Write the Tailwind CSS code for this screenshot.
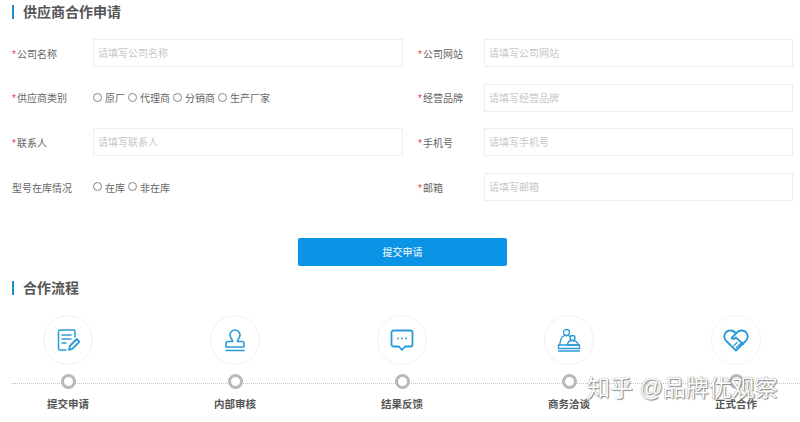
<!DOCTYPE html>
<html lang="zh-CN">
<head>
    <meta charset="UTF-8">
    <meta name="viewport" content="width=device-width, initial-scale=1.0">
    <title>供应商合作申请</title>
    <script src="https://cdn.jsdelivr.net/npm/@tailwindcss/browser@4"></script>
</head>
<body class="bg-white overflow-hidden font-['Liberation_Sans','Noto_Sans_CJK_SC',sans-serif]">
<div class="relative w-[800px] h-[422px] overflow-hidden pl-3 pr-[7px] pt-[4px]">
    <!-- 申请表单 -->
    <div class="flex items-center h-4 gap-[9px]">
        <span class="w-[2px] h-[14px] bg-[#1c8fc9]"></span>
        <h2 class="text-[14px] leading-4 font-bold text-[#555]">供应商合作申请</h2>
    </div>

    <div class="grid grid-cols-[406px_1fr] auto-rows-[28px] gap-y-[16.7px] mt-[19px] text-[10px] text-[#666]">
        <div class="flex items-center">
            <label class="w-[81px] pt-[2px]"><span class="text-[#e0414a] mr-[1px]">*</span>公司名称</label>
            <input class="w-[310px] h-[28px] px-1 pt-[1px] border border-[#eeeeee] outline-none placeholder:text-[#c8c8c8]" placeholder="请填写公司名称">
        </div>
        <div class="flex items-center">
            <label class="w-[66px] pt-[2px]"><span class="text-[#e0414a] mr-[1px]">*</span>公司网站</label>
            <input class="flex-1 h-[28px] px-1 pt-[1px] border border-[#eeeeee] outline-none placeholder:text-[#c8c8c8]" placeholder="请填写公司网站">
        </div>

        <div class="flex items-center">
            <label class="w-[81px] pt-[2px]"><span class="text-[#e0414a] mr-[1px]">*</span>供应商类别</label>
            <div class="flex items-center">
                <span class="w-[9px] h-[9px] -mt-[1px] rounded-full border border-[#888] mr-[3px]"></span><span class="mr-[3px] pt-[2px]">原厂</span>
                <span class="w-[9px] h-[9px] -mt-[1px] rounded-full border border-[#888] mr-[3px]"></span><span class="mr-[3px] pt-[2px]">代理商</span>
                <span class="w-[9px] h-[9px] -mt-[1px] rounded-full border border-[#888] mr-[3px]"></span><span class="mr-[3px] pt-[2px]">分销商</span>
                <span class="w-[9px] h-[9px] -mt-[1px] rounded-full border border-[#888] mr-[3px]"></span><span class="pt-[2px]">生产厂家</span>
            </div>
        </div>
        <div class="flex items-center">
            <label class="w-[66px] pt-[2px]"><span class="text-[#e0414a] mr-[1px]">*</span>经营品牌</label>
            <input class="flex-1 h-[28px] px-1 pt-[1px] border border-[#eeeeee] outline-none placeholder:text-[#c8c8c8]" placeholder="请填写经营品牌">
        </div>

        <div class="flex items-center">
            <label class="w-[81px] pt-[2px]"><span class="text-[#e0414a] mr-[1px]">*</span>联系人</label>
            <input class="w-[310px] h-[28px] px-1 pt-[1px] border border-[#eeeeee] outline-none placeholder:text-[#c8c8c8]" placeholder="请填写联系人">
        </div>
        <div class="flex items-center">
            <label class="w-[66px] pt-[2px]"><span class="text-[#e0414a] mr-[1px]">*</span>手机号</label>
            <input class="flex-1 h-[28px] px-1 pt-[1px] border border-[#eeeeee] outline-none placeholder:text-[#c8c8c8]" placeholder="请填写手机号">
        </div>

        <div class="flex items-center">
            <label class="w-[81px] pt-[2px]">型号在库情况</label>
            <div class="flex items-center">
                <span class="w-[9px] h-[9px] -mt-[1px] rounded-full border border-[#888] mr-[3px]"></span><span class="mr-[3px] pt-[2px]">在库</span>
                <span class="w-[9px] h-[9px] -mt-[1px] rounded-full border border-[#888] mr-[3px]"></span><span class="pt-[2px]">非在库</span>
            </div>
        </div>
        <div class="flex items-center">
            <label class="w-[66px] pt-[2px]"><span class="text-[#e0414a] mr-[1px]">*</span>邮箱</label>
            <input class="flex-1 h-[28px] px-1 pt-[1px] border border-[#eeeeee] outline-none placeholder:text-[#c8c8c8]" placeholder="请填写邮箱">
        </div>
    </div>

    <button class="block w-[209px] h-[28px] ml-[286px] mt-[37px] bg-[#0b93e6] rounded-[2px] text-white text-[10px]">提交申请</button>

    <!-- 合作流程 -->
    <div class="flex items-center h-4 gap-[9px] mt-[14px]">
        <span class="w-[2px] h-[14px] bg-[#1c8fc9]"></span>
        <h2 class="text-[14px] leading-4 font-bold text-[#555]">合作流程</h2>
    </div>

    <div class="relative mt-[19px] -mr-[7px]">
        <div class="absolute left-0 right-0 top-[68px] border-t border-dotted border-[#c4c4c4]"></div>
        <div class="relative flex gap-[117px] pl-[31px]">
            <div class="flex flex-col items-center w-[50px]">
                <div class="w-[50px] h-[50px] rounded-full bg-white border border-[#f0f0f0] flex items-center justify-center">
                    <svg class="w-[24px] h-[24px]" viewBox="0 0 24 24" fill="none" stroke="#2d9ad8" stroke-width="1.500" stroke-linecap="round" stroke-linejoin="round">
                        <path d="M19 9V3.500a1.500 1.500 0 0 0-1.500-1.500H4A1.500 1.500 0 0 0 2.500 3.500v17A1.500 1.500 0 0 0 4 22h6"/>
                        <path d="M6 7h9M6 11h9M6 15h4"/>
                        <path d="M13 22l.8-4 7-7 2.700 2.700-7 7z" stroke-width="1.800"/>
                    </svg>
                </div>
                <div class="w-[15px] h-[15px] rounded-full border-[3.500px] border-[#b8b8b8] bg-white mt-[9px]"></div>
                <span class="mt-[9px] text-[10.500px] leading-3 font-bold text-[#555] whitespace-nowrap">提交申请</span>
            </div>

            <div class="flex flex-col items-center w-[50px]">
                <div class="w-[50px] h-[50px] rounded-full bg-white border border-[#f0f0f0] flex items-center justify-center">
                    <svg class="w-[24px] h-[24px]" viewBox="0 0 24 24" fill="none" stroke="#2d9ad8" stroke-width="1.600" stroke-linecap="round" stroke-linejoin="round">
                        <path d="M9.500 13.500c0-2.500-2.500-3.500-2.500-6.500a5 5 0 0 1 10 0c0 3-2.500 4-2.500 6.500"/>
                        <path d="M9.500 13.500H5a2 2 0 0 0-2 2V19h18v-3.500a2 2 0 0 0-2-2h-4.500"/>
                        <path d="M3 22.500h18"/>
                    </svg>
                </div>
                <div class="w-[15px] h-[15px] rounded-full border-[3.500px] border-[#b8b8b8] bg-white mt-[9px]"></div>
                <span class="mt-[9px] text-[10.500px] leading-3 font-bold text-[#555] whitespace-nowrap">内部审核</span>
            </div>

            <div class="flex flex-col items-center w-[50px]">
                <div class="w-[50px] h-[50px] rounded-full bg-white border border-[#f0f0f0] flex items-center justify-center">
                    <svg class="w-[24px] h-[24px]" viewBox="0 0 24 24" fill="none" stroke="#2d9ad8" stroke-width="1.800" stroke-linecap="round" stroke-linejoin="round">
                        <path d="M3.500 2.500h17a2 2 0 0 1 2 2v12a2 2 0 0 1-2 2h-5.500L12 22l-3-3.500H3.500a2 2 0 0 1-2-2v-12a2 2 0 0 1 2-2z"/>
                        <path d="M8 10.500h.1M12 10.500h.1M16 10.500h.1"/>
                    </svg>
                </div>
                <div class="w-[15px] h-[15px] rounded-full border-[3.500px] border-[#b8b8b8] bg-white mt-[9px]"></div>
                <span class="mt-[9px] text-[10.500px] leading-3 font-bold text-[#555] whitespace-nowrap">结果反馈</span>
            </div>

            <div class="flex flex-col items-center w-[50px]">
                <div class="w-[50px] h-[50px] rounded-full bg-white border border-[#f0f0f0] flex items-center justify-center">
                    <svg class="w-[24px] h-[24px]" viewBox="0 0 24 24" fill="none" stroke="#2d9ad8" stroke-width="1.300" stroke-linecap="round" stroke-linejoin="round">
                        <circle cx="9.500" cy="4.500" r="3"/>
                        <path d="M2.500 17l1.500-6c.5-2 2-3 3.500-3.500h4c1 .3 1.500.8 2 1.500"/>
                        <circle cx="15.500" cy="10" r="2.500"/>
                        <path d="M10.500 17c0-2.500 1.500-4.500 5-4.500s5 2 6 4.500z"/>
                        <path d="M1.500 17h21v3.500h-21zM1.500 23h21"/>
                    </svg>
                </div>
                <div class="w-[15px] h-[15px] rounded-full border-[3.500px] border-[#b8b8b8] bg-white mt-[9px]"></div>
                <span class="mt-[9px] text-[10.500px] leading-3 font-bold text-[#555] whitespace-nowrap">商务洽谈</span>
            </div>

            <div class="flex flex-col items-center w-[50px]">
                <div class="w-[50px] h-[50px] rounded-full bg-white border border-[#f0f0f0] flex items-center justify-center">
                    <svg class="w-[26px] h-[26px]" viewBox="0 0 26 26" fill="none" stroke="#2d9ad8" stroke-width="1.800" stroke-linecap="round" stroke-linejoin="round">
                        <path d="M13 23.500L2.800 13.500C-.5 9.500 2 3.500 7.500 3.500c2.500 0 4 1 5.500 3 1.500-2 3-3 5.500-3 5.500 0 8 6 4.700 10z"/>
                        <path d="M13 6.500L8.500 11c1.500 1.500 3 1 4.500-.5l7 6.500"/>
                        <path d="M11 18.500l3-3M13.500 20.500l3-3M16.500 18l2.500-2.500" stroke-width="1.300"/>
                    </svg>
                </div>
                <div class="w-[15px] h-[15px] rounded-full border-[3.500px] border-[#b8b8b8] bg-white mt-[9px]"></div>
                <span class="mt-[9px] text-[10.500px] leading-3 font-bold text-[#555] whitespace-nowrap">正式合作</span>
            </div>
        </div>
    </div>

    <!-- 水印 -->
    <div class="absolute left-[587px] top-[374px] text-[23px] leading-7 text-white whitespace-nowrap [text-shadow:0_0_1px_#777,1px_1px_1px_#888]">知乎 @品牌优观察</div>
</div>
</body>
</html>
